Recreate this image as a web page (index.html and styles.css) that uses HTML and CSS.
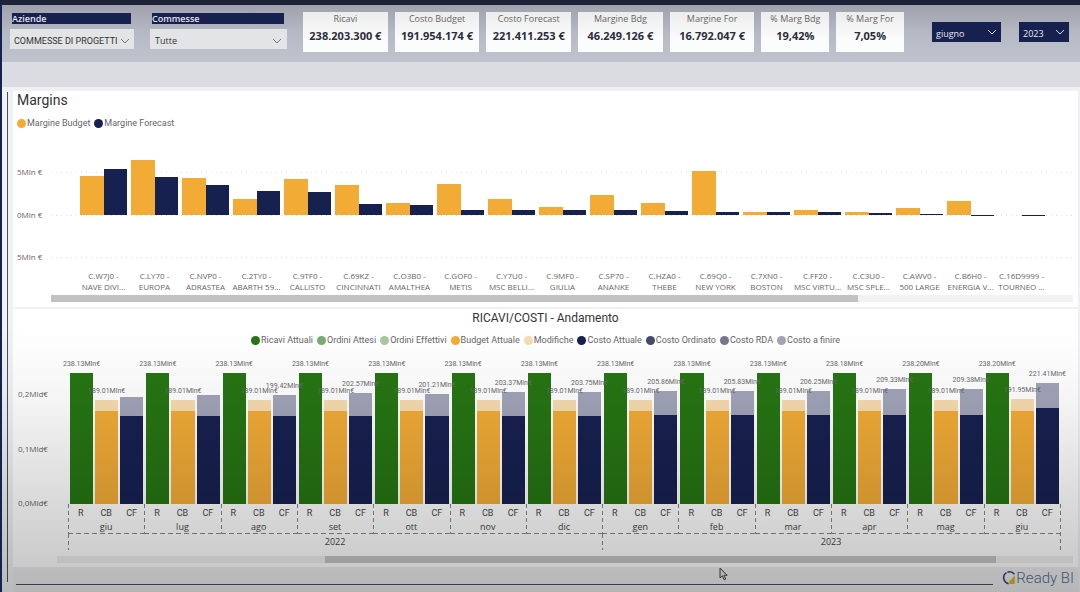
FILE: index.html
```html
<!DOCTYPE html>
<html lang="it">
<head>
<meta charset="utf-8">
<meta name="viewport" content="width=device-width, initial-scale=1">
<title>Ready BI - Margins</title>
<link rel="stylesheet" href="styles.css">
</head>
<body class="page">
<header class="header">
  <div class="slicers">
    <div class="slicer slicer-a">
      <label class="slicer-title" for="aziende">Aziende</label>
      <div class="picker">
        <select id="aziende" class="picker-select"><option>COMMESSE DI PROGETTI</option></select>
        <svg class="chevron" viewBox="0 0 10 6"><path d="M1 1l4 4 4-4"/></svg>
      </div>
    </div>
    <div class="slicer slicer-b">
      <label class="slicer-title" for="commesse">Commesse</label>
      <div class="picker">
        <select id="commesse" class="picker-select"><option>Tutte</option></select>
        <svg class="chevron" viewBox="0 0 10 6"><path d="M1 1l4 4 4-4"/></svg>
      </div>
    </div>
  </div>
  <dl class="kpis">
    <div class="kpi"><dt>Ricavi</dt><dd>238.203.300 €</dd></div>
    <div class="kpi"><dt>Costo Budget</dt><dd>191.954.174 €</dd></div>
    <div class="kpi"><dt>Costo Forecast</dt><dd>221.411.253 €</dd></div>
    <div class="kpi"><dt>Margine Bdg</dt><dd>46.249.126 €</dd></div>
    <div class="kpi"><dt>Margine For</dt><dd>16.792.047 €</dd></div>
    <div class="kpi"><dt>% Marg Bdg</dt><dd>19,42%</dd></div>
    <div class="kpi"><dt>% Marg For</dt><dd>7,05%</dd></div>
  </dl>
  <div class="dates">
    <div class="picker picker-dark">
      <select class="picker-select" aria-label="Mese"><option>giugno</option></select>
      <svg class="chevron" viewBox="0 0 10 6"><path d="M1 1l4 4 4-4"/></svg>
    </div>
    <div class="picker picker-dark">
      <select class="picker-select" aria-label="Anno"><option>2023</option></select>
      <svg class="chevron" viewBox="0 0 10 6"><path d="M1 1l4 4 4-4"/></svg>
    </div>
  </div>
</header>
<div class="band"></div>
<main class="report">
  <section class="card margins">
    <h2 class="margins-title">Margins</h2>
    <ul class="legend">
      <li class="key"><i class="dot amber"></i>Margine Budget</li>
      <li class="key"><i class="dot navy"></i>Margine Forecast</li>
    </ul>
    <div class="m-chart">
      <div class="m-axis"><span>5Mln €</span><span>0Mln €</span><span>5Mln €</span></div>
      <div class="m-plot">
        <div class="m-lines"><i></i><i></i><i></i></div>
        <div class="m-groups" id="margins"></div>
      </div>
    </div>
    <div class="track track-m"><div class="thumb thumb-m"></div></div>
  </section>
  <section class="card trend">
    <h2 class="trend-title">RICAVI/COSTI - Andamento</h2>
    <ul class="legend legend-center">
      <li class="key"><i class="dot green"></i>Ricavi Attuali</li>
      <li class="key"><i class="dot green-mid"></i>Ordini Attesi</li>
      <li class="key"><i class="dot green-light"></i>Ordini Effettivi</li>
      <li class="key"><i class="dot amber"></i>Budget Attuale</li>
      <li class="key"><i class="dot sand"></i>Modifiche</li>
      <li class="key"><i class="dot navy"></i>Costo Attuale</li>
      <li class="key"><i class="dot slate"></i>Costo Ordinato</li>
      <li class="key"><i class="dot mauve"></i>Costo RDA</li>
      <li class="key"><i class="dot lilac"></i>Costo a finire</li>
    </ul>
    <div class="t-chart">
      <div class="t-axis"><span>0,2Mld€</span><span>0,1Mld€</span><span>0,0Mld€</span></div>
      <div class="t-main">
        <div class="t-months" id="trend"></div>
        <div class="t-years"><span class="year year-a">2022</span><span class="year year-b">2023</span></div>
      </div>
    </div>
    <div class="track track-t"><div class="thumb thumb-t"></div></div>
  </section>
  <footer class="footer">
    <div class="rule"></div>
    <div class="brand">
      <svg class="brand-mark" viewBox="0 0 14 16">
        <path d="M12.4 4.4A6 6 0 0 0 5.4 2.2" fill="none" stroke="#2f4a73" stroke-width="1.6"/>
        <path d="M4.4 2.7A6 6 0 0 0 6.6 13.6" fill="none" stroke="#2f4a73" stroke-width="1.6"/>
        <path d="M7.4 14v-3.2l2-1V14zM9.4 14V9l1.8-1.4V14zM11.2 14V7l1.6-1.2V14z" fill="#d9b52c"/>
      </svg>
      <span>Ready BI</span>
    </div>
  </footer>
</main>
<svg class="cursor" viewBox="0 0 9 14"><path d="M1 1v10l2.4-2.1 1.8 3.9 1.6-.8L5 8.3h3.2z" fill="#ddd" stroke="#444" stroke-width="1"/></svg>
<script src="app.js"></script>
</body>
</html>
```
FILE: styles.css
```css
* { box-sizing: border-box; }

.page {
  margin: 0;
  min-height: 100vh;
  position: relative;
  display: flex;
  flex-direction: column;
  border-top: 5px solid #1f2338;
  border-left: 2px solid #172150;
  background: #f1f1f3;
  font-family: "Open Sans", "Noto Sans", sans-serif;
  font-size: 9px;
  line-height: 12px;
  color: #666;
}

/* soft shade towards the foot of the page */
.page::after {
  content: "";
  position: absolute;
  inset: 0;
  pointer-events: none;
  background: linear-gradient(transparent 55%, rgba(0, 0, 0, .04) 67%, rgba(0, 0, 0, .15) 85%, rgba(0, 0, 0, .23));
}

.header {
  display: flex;
  align-items: flex-start;
  height: 57px;
  padding: 7px 11px 0 8px;
  background: linear-gradient(#9fa1ac, #b6bac5 50%, #bfc3ce);
}
.slicers { flex: 277; display: flex; gap: 16px; }
.slicer-a { flex: 124; min-width: 0; }
.slicer-b { flex: 137; min-width: 0; }
.slicer-title {
  display: block;
  margin: 1px 3px 5px 2px;
  height: 11px;
  line-height: 11px;
  background: #172150;
  color: #e4e4ea;
  font-weight: 600;
}

.picker { position: relative; }
.picker-select {
  display: block;
  width: 100%;
  height: 20px;
  padding: 3px 12px 0 5px;
  border: 0;
  border-radius: 0;
  appearance: none;
  background: #e3e4e5;
  color: #333;
  font: 9px/16px "Open Sans", sans-serif;
}
.slicer-a .picker-select { padding: 3px 0 0 4px; font-family: Roboto, sans-serif; }
.chevron {
  position: absolute;
  right: 5px;
  top: 9px;
  width: 10px;
  height: 6px;
  fill: none;
  stroke: #777;
  pointer-events: none;
}
.slicer-a .chevron { right: 4px; }
.picker-dark .picker-select { padding-left: 4px; background: #172150; color: #e8e8ee; }
.picker-dark .chevron { stroke: #d5d6e0; top: 7px; right: 4px; }

.kpis {
  flex: 601;
  display: grid;
  grid-template-columns: repeat(5, 85fr) repeat(2, 68fr);
  gap: 7px;
  margin: 0 28px 0 16px;
}
.kpi {
  height: 40px;
  padding-top: 1px;
  background: linear-gradient(#ececec, #fbfcfc 70%);
  text-align: center;
  white-space: nowrap;
}
.kpi dt { color: #666; line-height: 12px; }
.kpi dd { margin: 4px 0 0; color: #2b2d3c; font-size: 11px; font-weight: 700; line-height: 14px; }

.dates { flex: 137; display: grid; grid-template-columns: 69fr 50fr; gap: 18px; padding-top: 10px; }

.band { height: 25px; background: #dbdce1; }

.report {
  flex: 1;
  display: flex;
  flex-direction: column;
  margin: 4px 2px 0 5px;
  padding-left: 6px;
  position: relative;
}
.report::before {
  content: "";
  position: absolute;
  left: 0;
  top: 1px;
  bottom: 10px;
  width: 1px;
  background: #4b4c66;
}
.card { background: #fff; }
.margins { padding: 1px 5px 4px 4px; height: 216px; }
.margins-title {
  margin: 0;
  color: #333;
  font: 400 14px/16px Roboto, sans-serif;
}
.legend {
  display: flex;
  gap: 4px;
  margin: 9px 0 0;
  padding: 0;
  list-style: none;
  font-family: Roboto, sans-serif;
}
.legend-center { justify-content: center; }
.key { display: flex; align-items: center; gap: 1px; white-space: nowrap; }
.dot { width: 9px; height: 9px; border-radius: 50%; }

.amber { background: #f2ac36; }
.navy { background: #172150; }
.green { background: #267513; }
.green-mid { background: #7cab72; }
.green-light { background: #a9c8a2; }
.sand { background: #f7dcae; }
.slate { background: #454a6b; }
.mauve { background: #77768f; }
.lilac { background: #a1a4b8; }

.m-chart { display: flex; }
.m-axis {
  width: 34px;
  height: 97px;
  margin-top: 37px;
  display: flex;
  flex-direction: column;
  justify-content: space-between;
  font-size: 8px;
}
.m-plot { flex: 1; display: grid; }
.m-lines { grid-area: 1 / 1; height: 86px; margin-top: 43px; display: flex; flex-direction: column; justify-content: space-between; }
.m-lines i { height: 1px; background: repeating-linear-gradient(90deg, #ddd 0 1px, transparent 1px 5px); }
.m-groups { grid-area: 1 / 1; display: flex; padding: 0 26px 0 27px; }
.m-group { flex: 1; min-width: 0; }
.m-bars { display: grid; grid-template: 86px 43px / 1fr 1fr; padding: 0 2px; }
.m-up { align-self: end; }
.m-label { margin-top: 12px; font-size: 8px; line-height: 11px; text-align: center; white-space: nowrap; }

.track { height: 7px; background: #f2f2f2; }
.thumb { height: 7px; background: #c2c2c2; }
.track-m { margin: 3px 0 0 34px; }
.thumb-m { width: 79%; }

.trend { margin-top: 2px; padding: 2px 5px 4px; }
.trend-title { margin: 0; text-align: center; color: #333; font: 400 12px/14px Roboto, sans-serif; }
.t-chart { display: flex; margin-top: 5px; }
.t-axis { width: 50px; height: 121px; margin-top: 37px; display: flex; flex-direction: column; justify-content: space-between; font-size: 8px; }
.t-main { flex: 1; padding-right: 13px; }
.t-months { display: grid; grid-template-columns: repeat(13, 1fr); }
.month { border-left: 1px solid transparent; }
.stacks { height: 153px; display: grid; grid-template-columns: repeat(3, 1fr); gap: 2px; padding: 0 1px; align-items: end; }
.stack { position: relative; display: flex; align-items: flex-end; }
.base { width: 100%; }
.value {
  position: absolute;
  bottom: 100%;
  left: 50%;
  transform: translateX(-50%);
  padding-bottom: 4px;
  font: 7px/10px Roboto, sans-serif;
  z-index: 1;
}
.ticks {
  padding-top: 3px;
  height: 30px;
  display: grid;
  grid-template-columns: repeat(3, 1fr);
  text-align: center;
  color: #444;
  margin-left: -1px;
  background:
    repeating-linear-gradient(180deg, #888 0 4px, transparent 4px 7px) left / 1px 100% no-repeat,
    repeating-linear-gradient(90deg, #888 0 5px, transparent 5px 8px) bottom / 100% 1px no-repeat;
}
.ticks span { font: 9px/12px Roboto, sans-serif; }
.ticks .month-name { grid-column: 1 / 4; font-family: "Open Sans", sans-serif; }
.t-years { display: flex; color: #444; text-align: center; }
.year {
  height: 16px;
  line-height: 16px;
  background: repeating-linear-gradient(180deg, #888 0 4px, transparent 4px 7px) left / 1px 100% no-repeat;
}
.year-a { flex: 7; }
.year-b { flex: 6; }
.t-main { background: repeating-linear-gradient(180deg, #888 0 4px, transparent 4px 7px) right 12px bottom / 1px 46px no-repeat; }
.track-t { margin: 6px 0 0 39px; background: #f0f0f0; }
.thumb-t { width: 66%; margin-left: 26.4%; background: #c6c6c6; }

.footer { display: flex; align-items: center; flex: 1; min-height: 24px; background: #ededef; }
.rule { flex: 1; height: 1px; margin: 10px 9px 0 3px; background: #4b4c66; }
.brand {
  display: flex;
  align-items: center;
  padding: 0 4px 4px 0;
  color: #4f6d90;
  font: 300 15px/18px Roboto, sans-serif;
}
.brand-mark { width: 14px; height: 16px; }
.cursor { position: absolute; left: 66.5%; top: 562px; width: 9px; height: 14px; }
```
FILE: app.js
```js
// Margins in millions: code, name, budget, forecast
const margins = [
  ["C.W7J0 -", "NAVE DIVI...", 4.5, 5.4], ["C.LY70 -", "EUROPA", 6.4, 4.4],
  ["C.NVP0 -", "ADRASTEA", 4.35, 3.45], ["C.2TY0 -", "ABARTH 59...", 1.9, 2.75],
  ["C.9TF0 -", "CALLISTO", 4.2, 2.65], ["C.69KZ -", "CINCINNATI", 3.45, 1.25],
  ["C.O3B0 -", "AMALTHEA", 1.35, 1.2], ["C.GOF0 -", "METIS", 3.55, 0.6],
  ["C.Y7U0 -", "MSC BELLI...", 1.9, 0.6], ["C.9MF0 -", "GIULIA", 0.9, 0.55],
  ["C.SP70 -", "ANANKE", 2.35, 0.55], ["C.HZA0 -", "THEBE", 1.35, 0.5],
  ["C.69Q0 -", "NEW YORK", 5.1, 0.35], ["C.7XN0 -", "BOSTON", 0.3, 0.35],
  ["C.FF20 -", "MSC VIRTU...", 0.55, 0.3], ["C.C3U0 -", "MSC SPLE...", 0.35, 0.2],
  ["C.AWV0 -", "500 LARGE", 0.85, 0.12], ["C.B6H0 -", "ENERGIA V...", 1.6, -0.12],
  ["C.16D9999 -", "TOURNEO ...", 0, -0.12]
];
const bar = (v, cls, col) => {
  const h = Math.abs(v) * (v < 0 ? 20 : 10);
  return `<div class="${cls} ${v < 0 ? "" : "m-up"}" style="grid-area:${v < 0 ? 2 : 1}/${col};height:${h}%"></div>`;
};
document.getElementById("margins").innerHTML = margins.map(([code, name, b, f]) =>
  `<div class="m-group"><div class="m-bars">${bar(b, "amber", 1)}${bar(f, "navy", 2)}</div>
   <div class="m-label">${code}<br>${name}</div></div>`).join("");

// Trend in millions: month, revenue, budget total, current cost, forecast total, forecast label shown
const trend = [
  ["giu", "238.13", "189.01", 160, "195.50", 0], ["lug", "238.13", "189.01", 160, "199.30", 0],
  ["ago", "238.13", "189.01", 160, "199.42", 1], ["set", "238.13", "189.01", 161, "202.57", 1],
  ["ott", "238.13", "189.01", 161, "201.21", 1], ["nov", "238.13", "189.01", 161, "203.37", 1],
  ["dic", "238.13", "189.01", 161, "203.75", 1], ["gen", "238.13", "189.01", 162, "205.86", 1],
  ["feb", "238.13", "189.01", 162, "205.83", 1], ["mar", "238.13", "189.01", 162, "206.25", 1],
  ["apr", "238.18", "189.01", 163, "209.33", 1], ["mag", "238.20", "189.01", 163, "209.38", 1],
  ["giu", "238.20", "191.95", 175, "221.41", 1]
];
const FULL = 279;
const stack = (total, base, top, bottom, label) =>
  `<div class="stack ${top}" style="height:${total / FULL * 100}%">
   ${label ? `<span class="value">${total}Mln€</span>` : ""}
   <div class="base ${bottom}" style="height:${base / total * 100}%"></div></div>`;
document.getElementById("trend").innerHTML = trend.map(([m, r, b, c, f, show]) =>
  `<div class="month"><div class="stacks">${stack(r, r, "green", "green", true)}${stack(b, 169, "sand", "amber", true)}${stack(f, c, "lilac", "navy", show)}</div>
   <div class="ticks"><span>R</span><span>CB</span><span>CF</span><span class="month-name">${m}</span></div></div>`).join("");
```
